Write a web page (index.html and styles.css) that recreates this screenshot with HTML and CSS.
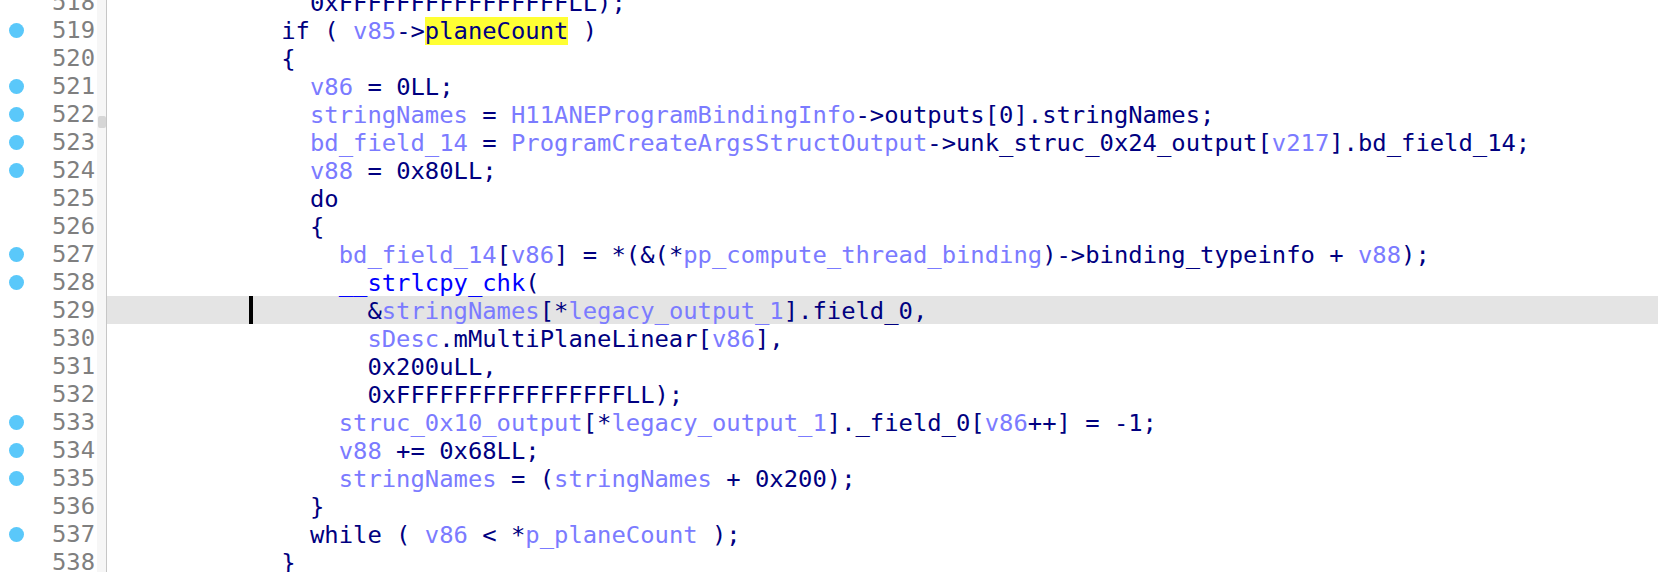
FILE: index.html
```html
<!DOCTYPE html>
<html>
<head>
<meta charset="utf-8">
<link rel="stylesheet" href="styles.css">
</head>
<body>
<div class="editor">
  <div class="thumb"></div>
  <div class="row"><div class="gutter"><span class="dot none"></span><span class="num">518</span></div><div class="strip"></div><div class="code"><span class="t">              0xFFFFFFFFFFFFFFFFLL);</span></div></div>
  <div class="row"><div class="gutter"><span class="dot"></span><span class="num">519</span></div><div class="strip"></div><div class="code"><span class="t">            if ( <span class="v">v85</span>-&gt;<span class="hl">planeCount</span> )</span></div></div>
  <div class="row"><div class="gutter"><span class="dot none"></span><span class="num">520</span></div><div class="strip"></div><div class="code"><span class="t">            {</span></div></div>
  <div class="row"><div class="gutter"><span class="dot"></span><span class="num">521</span></div><div class="strip"></div><div class="code"><span class="t">              <span class="v">v86</span> = 0LL;</span></div></div>
  <div class="row"><div class="gutter"><span class="dot"></span><span class="num">522</span></div><div class="strip"></div><div class="code"><span class="t">              <span class="v">stringNames</span> = <span class="v">H11ANEProgramBindingInfo</span>-&gt;outputs[0].stringNames;</span></div></div>
  <div class="row"><div class="gutter"><span class="dot"></span><span class="num">523</span></div><div class="strip"></div><div class="code"><span class="t">              <span class="v">bd_field_14</span> = <span class="v">ProgramCreateArgsStructOutput</span>-&gt;unk_struc_0x24_output[<span class="v">v217</span>].bd_field_14;</span></div></div>
  <div class="row"><div class="gutter"><span class="dot"></span><span class="num">524</span></div><div class="strip"></div><div class="code"><span class="t">              <span class="v">v88</span> = 0x80LL;</span></div></div>
  <div class="row"><div class="gutter"><span class="dot none"></span><span class="num">525</span></div><div class="strip"></div><div class="code"><span class="t">              do</span></div></div>
  <div class="row"><div class="gutter"><span class="dot none"></span><span class="num">526</span></div><div class="strip"></div><div class="code"><span class="t">              {</span></div></div>
  <div class="row"><div class="gutter"><span class="dot"></span><span class="num">527</span></div><div class="strip"></div><div class="code"><span class="t">                <span class="v">bd_field_14</span>[<span class="v">v86</span>] = *(&amp;(*<span class="v">pp_compute_thread_binding</span>)-&gt;binding_typeinfo + <span class="v">v88</span>);</span></div></div>
  <div class="row"><div class="gutter"><span class="dot"></span><span class="num">528</span></div><div class="strip"></div><div class="code"><span class="t">                <span class="fn">__strlcpy_chk</span>(</span></div></div>
  <div class="row current"><div class="gutter"><span class="dot none"></span><span class="num">529</span></div><div class="strip"></div><div class="code"><span class="caret"></span><span class="t">                  &amp;<span class="v">stringNames</span>[*<span class="v">legacy_output_1</span>].field_0,</span></div></div>
  <div class="row"><div class="gutter"><span class="dot none"></span><span class="num">530</span></div><div class="strip"></div><div class="code"><span class="t">                  <span class="v">sDesc</span>.mMultiPlaneLinear[<span class="v">v86</span>],</span></div></div>
  <div class="row"><div class="gutter"><span class="dot none"></span><span class="num">531</span></div><div class="strip"></div><div class="code"><span class="t">                  0x200uLL,</span></div></div>
  <div class="row"><div class="gutter"><span class="dot none"></span><span class="num">532</span></div><div class="strip"></div><div class="code"><span class="t">                  0xFFFFFFFFFFFFFFFFLL);</span></div></div>
  <div class="row"><div class="gutter"><span class="dot"></span><span class="num">533</span></div><div class="strip"></div><div class="code"><span class="t">                <span class="v">struc_0x10_output</span>[*<span class="v">legacy_output_1</span>]._field_0[<span class="v">v86</span>++] = -1;</span></div></div>
  <div class="row"><div class="gutter"><span class="dot"></span><span class="num">534</span></div><div class="strip"></div><div class="code"><span class="t">                <span class="v">v88</span> += 0x68LL;</span></div></div>
  <div class="row"><div class="gutter"><span class="dot"></span><span class="num">535</span></div><div class="strip"></div><div class="code"><span class="t">                <span class="v">stringNames</span> = (<span class="v">stringNames</span> + 0x200);</span></div></div>
  <div class="row"><div class="gutter"><span class="dot none"></span><span class="num">536</span></div><div class="strip"></div><div class="code"><span class="t">              }</span></div></div>
  <div class="row"><div class="gutter"><span class="dot"></span><span class="num">537</span></div><div class="strip"></div><div class="code"><span class="t">              while ( <span class="v">v86</span> &lt; *<span class="v">p_planeCount</span> );</span></div></div>
  <div class="row"><div class="gutter"><span class="dot none"></span><span class="num">538</span></div><div class="strip"></div><div class="code"><span class="t">            }</span></div></div>
</div>
</body>
</html>
```

FILE: styles.css
```css
html, body {
  margin: 0;
  padding: 0;
  background: #ffffff;
  overflow: hidden;
}

.editor {
  position: relative;
  margin-top: -12px;
  font-family: "DejaVu Sans Mono", "Liberation Mono", monospace;
  font-size: 23.85px;
  line-height: 28px;
}

.row {
  display: flex;
  height: 28px;
}

.gutter {
  width: 97px;
  display: flex;
  align-items: center;
  flex-shrink: 0;
  background: #ffffff;
}

.dot {
  width: 15px;
  height: 15px;
  border-radius: 50%;
  background: #5ac8fa;
  margin-left: 9px;
  flex-shrink: 0;
}

.dot.none {
  background: transparent;
}

.num {
  flex: 1;
  text-align: right;
  padding-right: 2px;
  color: #7f7f7f;
  white-space: pre;
}

.strip {
  width: 9px;
  flex-shrink: 0;
  background: #f6f6f6;
  border-right: 1px solid #c6c6c6;
}

.code {
  position: relative;
  flex: 1;
  padding-left: 2px;
  white-space: pre;
  color: #000080;
}

.t {
  position: relative;
  z-index: 1;
  display: block;
  padding-top: 1px;
  height: 27px;
}

.row.current .code {
  background: #e4e4e4;
}

.v {
  color: #7b7bff;
}

.fn {
  color: #0000ff;
}

.hl {
  background: #ffff33;
}

.caret {
  position: absolute;
  left: 142px;
  top: 0;
  width: 4px;
  height: 28px;
  background: #000000;
  z-index: 2;
}

.thumb {
  position: absolute;
  left: 98px;
  top: 128px;
  width: 8px;
  height: 12px;
  border-radius: 2px;
  background: #d6d6d6;
  z-index: 2;
}
```
